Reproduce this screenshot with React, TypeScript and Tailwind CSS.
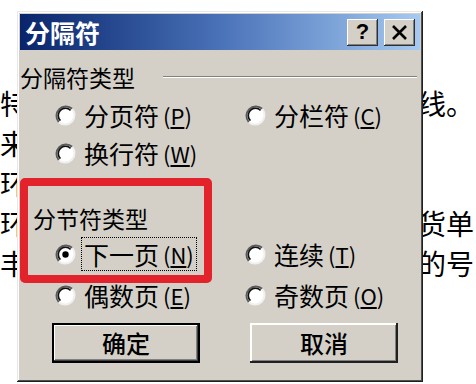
import type { ReactNode } from "react";

const cjk = "font-['Noto_Sans_CJK_SC',sans-serif]";

type DocLine = { left: string; right: string };

const docLines: DocLine[] = [
  { left: "特", right: "线。" },
  { left: "来", right: "" },
  { left: "环", right: "" },
  { left: "环", right: "货单" },
  { left: "丰", right: "的号" },
];

function Radio({ checked = false }: { checked?: boolean }) {
  return (
    <svg width="21" height="21" viewBox="0 0 21 21" className="shrink-0">
      <circle cx="10.5" cy="10.5" r="9.5" fill="#ffffff" />
      <path d="M17.2 3.8 A9.5 9.5 0 0 0 3.8 17.2" stroke="#5a5a5a" strokeWidth="2" fill="none" />
      <path d="M15.6 5.4 A7.2 7.2 0 0 0 5.4 15.6" stroke="#111111" strokeWidth="1.6" fill="none" />
      <path d="M3.8 17.2 A9.5 9.5 0 0 0 17.2 3.8" stroke="#f0f0f0" strokeWidth="2" fill="none" />
      {checked && <circle cx="10.5" cy="10.5" r="3.2" fill="#000000" />}
    </svg>
  );
}

function Option({
  label,
  hotkey,
  checked,
  focused,
}: {
  label: string;
  hotkey: string;
  checked?: boolean;
  focused?: boolean;
}) {
  return (
    <div className="flex items-center gap-[8px]">
      <Radio checked={checked} />
      <span
        className={`flex items-center gap-[4px] whitespace-nowrap text-[25px] leading-[28px] text-black ${
          focused ? "outline outline-1 outline-dotted outline-black outline-offset-[2px]" : ""
        }`}
      >
        {label}
        <span className="text-[22px]">
          (<span className="underline">{hotkey}</span>)
        </span>
      </span>
    </div>
  );
}

function TitleButton({ children }: { children: ReactNode }) {
  return (
    <div className="flex h-[27px] w-[31px] items-center justify-center bg-[#d4d0c8] shadow-[inset_-1px_-1px_#303030,inset_1px_1px_#ffffff,inset_-2px_-2px_#808080]">
      {children}
    </div>
  );
}

function PushButton({ label, isDefault }: { label: string; isDefault?: boolean }) {
  return (
    <div
      className={`flex h-[40px] w-[148px] items-center justify-center bg-[#d4d0c8] text-[24px] font-medium text-black ${
        isDefault
          ? "border-[2px] border-black shadow-[inset_-1px_-1px_#404040,inset_1px_1px_#ffffff,inset_-2px_-2px_#808080]"
          : "shadow-[inset_-2px_-2px_#202020,inset_2px_2px_#ffffff,inset_-3px_-3px_#808080]"
      }`}
    >
      {label}
    </div>
  );
}

export default function App() {
  return (
    <div className={`relative h-[384px] w-[476px] overflow-hidden bg-white ${cjk}`}>
      {/* document text behind the dialog */}
      <div className="relative z-0 pt-[83px]">
        {docLines.map((line, i) => (
          <div key={i} className="flex h-[40px] items-center text-[28px] leading-[40px] text-black">
            <div className="w-[17px] overflow-hidden whitespace-nowrap">{line.left}</div>
            <div className="ml-auto w-[53px] overflow-hidden whitespace-nowrap">
              <span className="-ml-[5px]">{line.right}</span>
            </div>
          </div>
        ))}
      </div>

      {/* dialog */}
      <div className="absolute left-[17px] top-[11px] z-10 flex h-[371px] w-[406px] flex-col bg-[#d4d0c8] p-[3px] shadow-[inset_-1px_-1px_#202020,inset_1px_1px_#e8e8e8,inset_-2px_-2px_#505050,inset_2px_2px_#ffffff]">
        <div className="flex h-[36px] items-center justify-between bg-gradient-to-r from-[#0a246a] via-[#4a72b8] to-[#a6caf0] pl-[5px] pr-[5px]">
          <span className="text-[25px] font-bold leading-none text-white">分隔符</span>
          <div className="flex gap-[6px]">
            <TitleButton>
              <span className="font-['Liberation_Sans',sans-serif] text-[22px] font-bold leading-none text-black">?</span>
            </TitleButton>
            <TitleButton>
              <svg width="17" height="15" viewBox="0 0 17 15">
                <path d="M2 1 L15 14 M15 1 L2 14" stroke="#000000" strokeWidth="2.6" />
              </svg>
            </TitleButton>
          </div>
        </div>

        <div className="flex flex-col pr-[3px]">
          <div className="mt-[8px] flex h-[38px] items-center">
            <span className="text-[23px] text-black">分隔符类型</span>
            <div className="ml-[28px] h-[2px] flex-1 border-t border-b border-t-[#808080] border-b-white" />
          </div>
          <div className="grid h-[38px] grid-cols-[190px_1fr] items-center pl-[35px]">
            <Option label="分页符" hotkey="P" />
            <Option label="分栏符" hotkey="C" />
          </div>
          <div className="grid h-[38px] grid-cols-[190px_1fr] items-center pl-[35px]">
            <Option label="换行符" hotkey="W" />
          </div>

          <div className="mt-[29px] flex h-[35px] items-center pl-[13px]">
            <span className="text-[23px] text-black">分节符类型</span>
          </div>
          <div className="grid h-[36px] grid-cols-[190px_1fr] items-center pl-[35px]">
            <Option label="下一页" hotkey="N" checked focused />
            <Option label="连续" hotkey="T" />
          </div>
          <div className="grid h-[46px] grid-cols-[190px_1fr] items-center pl-[35px]">
            <Option label="偶数页" hotkey="E" />
            <Option label="奇数页" hotkey="O" />
          </div>

          <div className="mt-[5px] flex gap-[50px] pl-[32px]">
            <PushButton label="确定" isDefault />
            <PushButton label="取消" />
          </div>
        </div>
      </div>

      {/* red highlight */}
      <div className="absolute left-[20px] top-[178px] z-20 h-[105px] w-[192px] rounded-[5px] border-[8px] border-[#e3232c]" />
    </div>
  );
}
